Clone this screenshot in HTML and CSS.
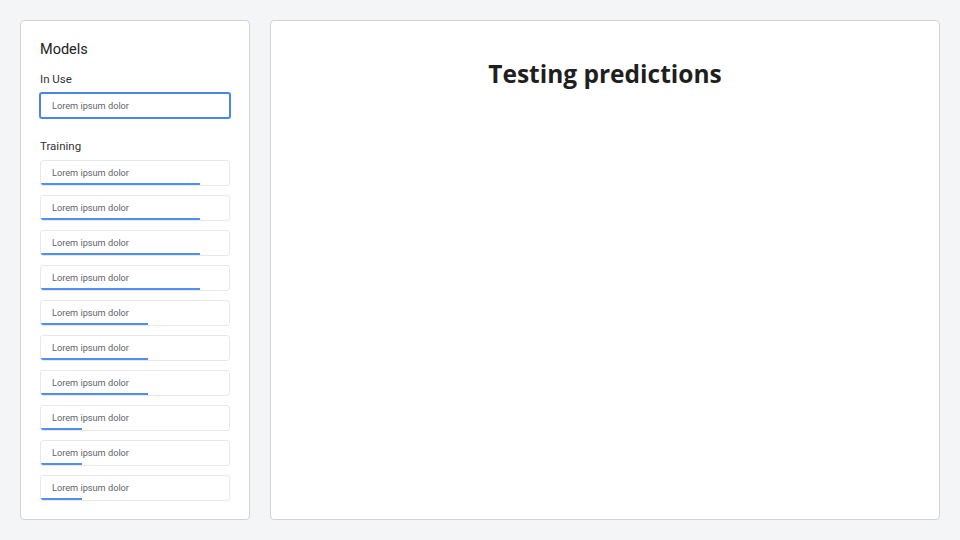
FILE: index.html
```html
<!DOCTYPE html>
<html>
<head>
<meta charset="utf-8">
<link rel="stylesheet" href="styles.css">
</head>
<body>
  <aside class="sidebar">
    <h2 class="title">Models</h2>
    <div class="label">In Use</div>
    <div class="model active">Lorem ipsum dolor</div>
    <div class="label training-label">Training</div>
    <div class="list">
      <div class="model"><span>Lorem ipsum dolor</span><div class="bar" style="width:160px"></div></div>
      <div class="model"><span>Lorem ipsum dolor</span><div class="bar" style="width:160px"></div></div>
      <div class="model"><span>Lorem ipsum dolor</span><div class="bar" style="width:160px"></div></div>
      <div class="model"><span>Lorem ipsum dolor</span><div class="bar" style="width:160px"></div></div>
      <div class="model"><span>Lorem ipsum dolor</span><div class="bar" style="width:108px"></div></div>
      <div class="model"><span>Lorem ipsum dolor</span><div class="bar" style="width:108px"></div></div>
      <div class="model"><span>Lorem ipsum dolor</span><div class="bar" style="width:108px"></div></div>
      <div class="model"><span>Lorem ipsum dolor</span><div class="bar" style="width:42px"></div></div>
      <div class="model"><span>Lorem ipsum dolor</span><div class="bar" style="width:42px"></div></div>
      <div class="model"><span>Lorem ipsum dolor</span><div class="bar" style="width:42px"></div></div>
    </div>
  </aside>
  <main class="main">
    <h1 class="heading">Testing predictions</h1>
  </main>
</body>
</html>
```
FILE: styles.css
```css
* { box-sizing: border-box; }
html, body { margin: 0; height: 100%; }
body {
  background: #f4f5f7;
  padding: 20px;
  display: flex;
  gap: 20px;
  font-family: "Roboto", "Open Sans", sans-serif;
  color: #202124;
}
.sidebar {
  width: 230px;
  height: 500px;
  background: #fff;
  border: 1px solid #cfd3d6;
  border-radius: 4px;
  padding: 19px 19px 0 19px;
  display: flex;
  flex-direction: column;
}
.title {
  margin: 0;
  font-size: 14.5px;
  font-weight: 400;
  line-height: 20px;
}
.label {
  margin-top: 11px;
  font-size: 11.5px;
  line-height: 16px;
  color: #333;
}
.training-label { margin-top: 19px; }
.model {
  position: relative;
  height: 26px;
  border: 1px solid #e8e8e8;
  border-radius: 3px;
  padding-left: 11px;
  font-size: 9.2px;
  line-height: 24px;
  color: #5f6368;
  overflow: hidden;
}
.model.active {
  margin: 5px -1px 0 -1px;
  height: 27px;
  border: 2px solid #4a86e8;
  padding-left: 11px;
  line-height: 23px;
}
.list {
  margin-top: 6px;
  display: flex;
  flex-direction: column;
  gap: 9px;
}
.bar {
  position: absolute;
  left: -1px;
  bottom: 0;
  height: 2px;
  background: #4f8ef2;
}
.main {
  flex: 1;
  height: 500px;
  background: #fff;
  border: 1px solid #cfd3d6;
  border-radius: 4px;
  padding-top: 38px;
  text-align: center;
}
.heading {
  margin: 0;
  font-family: "Open Sans", sans-serif;
  font-size: 24.5px;
  font-weight: 700;
  line-height: 30px;
  color: #1f1f1f;
}
```
